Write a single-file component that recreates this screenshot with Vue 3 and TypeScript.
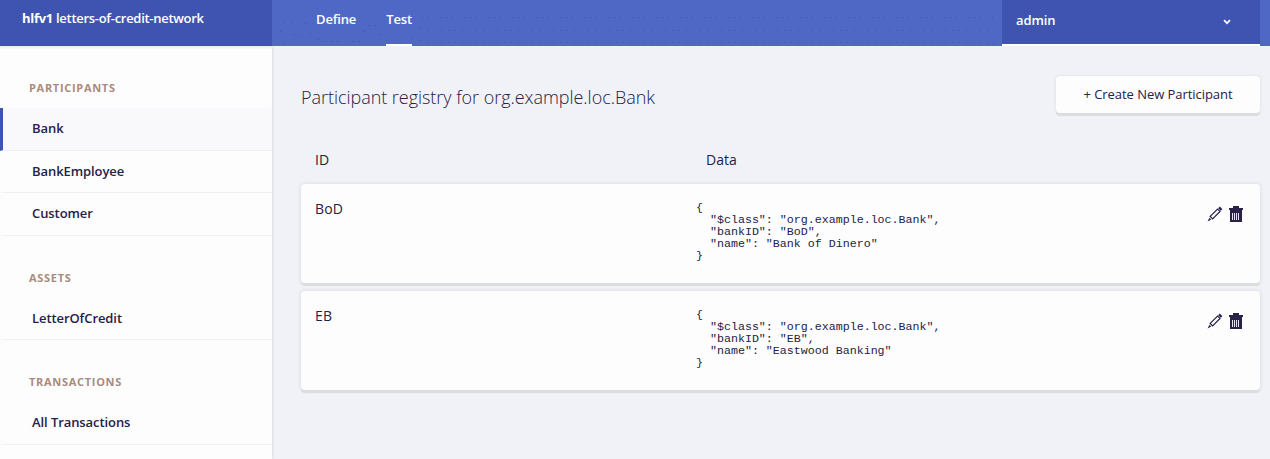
<script setup lang="ts">
interface Section { title: string; items: string[] }
interface Row { id: string; data: Record<string, string> }
type Point = [number, number]

const sections: Section[] = [
  { title: 'PARTICIPANTS', items: ['Bank', 'BankEmployee', 'Customer'] },
  { title: 'ASSETS', items: ['LetterOfCredit'] },
  { title: 'TRANSACTIONS', items: ['All Transactions'] },
]
const active = 'Bank'
const rows: Row[] = [
  { id: 'BoD', data: { $class: 'org.example.loc.Bank', bankID: 'BoD', name: 'Bank of Dinero' } },
  { id: 'EB', data: { $class: 'org.example.loc.Bank', bankID: 'EB', name: 'Eastwood Banking' } },
]
const format = (data: Record<string, string>): string => JSON.stringify(data, null, 2)

// Header texture: a loose cluster on the left, then three regular dotted lines.
const line = (start: number, step: number, count: number, y: number): Point[] =>
  Array.from({ length: count }, (_, i): Point => [start + i * step, y])
const dots: Point[] = [
  [12, 22], [19, 22], [26, 22], [33, 23], [8, 31], [38, 33], [22, 34], [29, 36], [11, 43],
  [46, 39], [53, 41], [59, 41], [65, 41], [81, 41], [87, 41], [98, 38], [91, 31], [97, 25],
  [103, 25], [108, 34], [114, 40], [129, 42], [140, 38], [147, 40], [147, 28],
  ...line(150, 6, 96, 17), ...line(155, 7, 81, 30), ...line(155, 7, 80, 42), [715, 43], [721, 43],
]
</script>

<template>
  <div class="app">
    <header class="top">
      <div class="brand"><b>hlfv1</b> letters-of-credit-network</div>
      <nav class="tabs">
        <svg class="texture" width="730" height="46" shape-rendering="crispEdges">
          <rect v-for="([x, y], i) in dots" :key="i" :x="x" :y="y" width="1" height="1" fill="#3e54ae" />
        </svg>
        <a class="tab">Define</a>
        <a class="tab current">Test</a>
      </nav>
      <div class="user">
        <span>admin</span>
        <svg class="chevron" width="8" height="6" viewBox="0 0 8 6"><path d="M1 1.2 4 4.2 7 1.2" fill="none" stroke="#fff" stroke-width="1.7" /></svg>
      </div>
    </header>
    <div class="body">
      <aside class="side">
        <section v-for="s in sections" :key="s.title" class="group">
          <h2>{{ s.title }}</h2>
          <ul>
            <li v-for="item in s.items" :key="item" :class="{ active: item === active }">{{ item }}</li>
          </ul>
        </section>
      </aside>
      <main class="main">
        <div class="heading">
          <h1>Participant registry for org.example.loc.Bank</h1>
          <button class="create">+ Create New Participant</button>
        </div>
        <div class="columns"><span>ID</span><span>Data</span></div>
        <article v-for="row in rows" :key="row.id" class="card">
          <span class="id">{{ row.id }}</span>
          <pre>{{ format(row.data) }}</pre>
          <div class="actions">
            <svg width="16" height="16" viewBox="0 0 16 16">
              <path d="M3.2 10.4 10.6 3 13 5.4 5.6 12.8Z" fill="none" stroke="#252148" stroke-width="1.2" />
              <path d="M11.2 2.2 12.8.6 15.4 3.2 13.8 4.8ZM2.4 11.8 4.2 13.6.6 15.4Z" fill="#252148" />
            </svg>
            <svg width="14" height="16" viewBox="0 0 14 16" shape-rendering="crispEdges">
              <path d="M4 0h6v2H4ZM0 2h14v2H0ZM1 4h12v12H1Z" fill="#2a2248" />
              <path d="M3.5 7V14M5.5 7V14M7.5 7V14M9.5 7V14" stroke="#e4e4f2" stroke-width="1" />
            </svg>
          </div>
        </article>
      </main>
    </div>
  </div>
</template>

<style>
body { margin: 0; }
</style>

<style scoped>
.app { width: 1270px; height: 459px; overflow: hidden; background: #f1f2f7; color: #252148; font-family: "Open Sans", sans-serif; display: flex; flex-direction: column; }
.top { height: 46px; flex: none; display: flex; background: #5068c5; color: #fff; box-sizing: border-box; padding-right: 10px; }
.brand { width: 272px; box-sizing: border-box; padding: 0 22px; background: #3f54b0; font-size: 13px; font-weight: 600; line-height: 37px; letter-spacing: -.29px; white-space: nowrap; }
.brand b { font-weight: 700; }
.tabs { position: relative; flex: 1; display: flex; gap: 30px; padding-left: 44px; font-size: 13px; font-weight: 600; line-height: 39px; letter-spacing: -.15px; }
.texture { position: absolute; left: 0; top: 0; }
.tab { position: relative; box-sizing: border-box; height: 46px; }
.current { border-bottom: 2px solid #fff; }
.user { width: 258px; box-sizing: border-box; display: flex; justify-content: space-between; background: #3f54b0; border-bottom: 2px solid #fff; padding: 0 29px 0 14px; font-size: 13px; font-weight: 600; line-height: 41px; letter-spacing: -.1px; }
.chevron { margin-top: 19px; }
.body { flex: 1; display: flex; min-height: 0; }
.side { width: 272px; flex: none; background: #fdfdfd; box-shadow: 0 0 3px rgba(60, 60, 80, .22), inset 0 3px 2px -1px #ececf1; padding-top: 23.4px; box-sizing: border-box; }
.group { margin-bottom: 23px; }
.group h2 { margin: 0; padding-left: 29px; height: 39px; line-height: 37px; font-size: 11px; font-weight: 700; letter-spacing: .7px; color: #a88b7e; }
.group ul { list-style: none; margin: 0; padding: 0; }
.group li { height: 42.45px; box-sizing: border-box; line-height: 41.4px; border-left: 3px solid transparent; border-bottom: 1px solid #eff0f4; background-clip: padding-box; padding-left: 29px; font-size: 13px; font-weight: 600; letter-spacing: -.08px; }
.group li.active { background: #f9f9fb; border-left-color: #3f54b0; }
.main { flex: 1; padding: 29px 10px 0 29px; }
.heading { display: flex; justify-content: space-between; }
h1 { margin: 0; font-size: 18px; font-weight: 300; line-height: 44px; letter-spacing: -.04px; }
.create { width: 204px; height: 37px; margin-top: 1px; border: 0; border-radius: 4px; background: #fdfdfd; box-shadow: 0 3px 0 #dcdddd, 0 0 3px rgba(60, 60, 60, .12); font: 500 13px/36px "Open Sans", sans-serif; letter-spacing: -.05px; color: #252148; padding: 0 0 1px; }
.columns { display: grid; grid-template-columns: 391px 1fr; padding-left: 14px; height: 65px; line-height: 81px; font-size: 14px; }
.card { height: 99px; margin-bottom: 8px; box-sizing: border-box; display: grid; grid-template-columns: 381px 1fr auto; padding: 0 17px 0 14px; background: #fdfdfd; border-radius: 4px; box-shadow: 0 3px 0 #dcdddd, 0 0 4px rgba(60, 60, 60, .14); }
.id { font-size: 14px; line-height: 50px; letter-spacing: .15px; }
pre { margin: 18px 0 0; font: 11.65px/12px "Courier New", "Liberation Mono", monospace; }
.actions { display: flex; gap: 6px; padding-top: 22px; }
</style>
